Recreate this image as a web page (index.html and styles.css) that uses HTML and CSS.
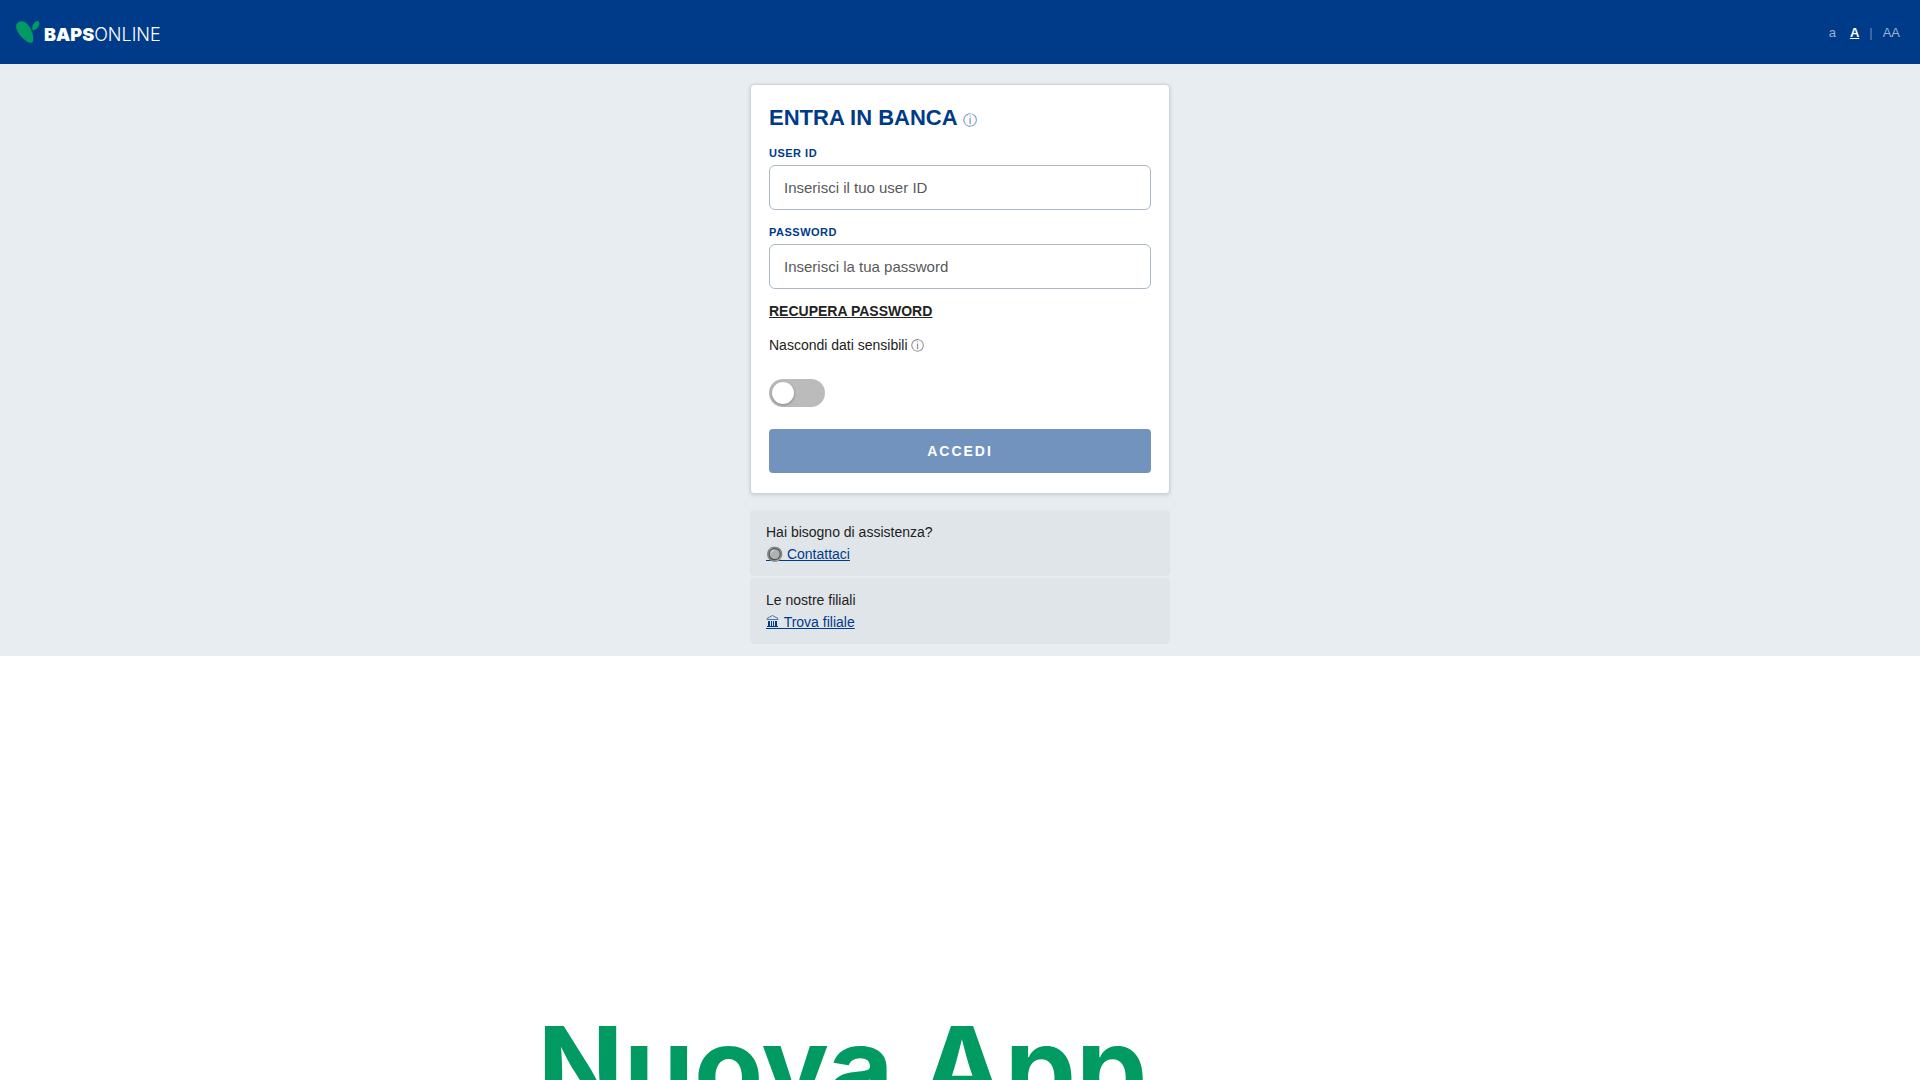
FILE: index.html
```html
<!DOCTYPE html>
<html lang="it">
<head>
<meta charset="utf-8">
<title>BAPSONLINE</title>
<link rel="stylesheet" href="styles.css">
</head>
<body>
<header class="topbar">
  <a class="logo" href="#">
    <svg class="logo-mark" viewBox="0 0 24 24" width="24" height="24" aria-hidden="true">
      <path d="M2 2.500C5 0 10 1.500 13 6C16 10.500 17.800 16 17 21C16.500 23.500 14 23.300 11 21.500C6 18.500 2 13 0.500 9C-0.300 6 0.200 4 2 2.500Z"/>
      <path d="M16.500 10C15.500 6 17.500 2.500 20.500 1.200C23.300 0.300 23.900 3 23 5.500C21.800 8.300 19 10.800 16.500 10Z"/>
    </svg>
    <span class="logo-text"><strong>BAPS</strong>ONLINE</span>
  </a>
  <nav class="text-size" aria-label="Dimensione testo">
    <a class="size small" href="#">a</a>
    <a class="size active" href="#">A</a>
    <span class="divider">|</span>
    <a class="size" href="#">AA</a>
  </nav>
</header>
<main>
  <section class="access">
    <form class="card">
      <h1 class="title">ENTRA IN BANCA <span class="info">ⓘ</span></h1>
      <label class="label" for="user">USER ID</label>
      <input class="field" id="user" type="text" placeholder="Inserisci il tuo user ID">
      <label class="label" for="pass">PASSWORD</label>
      <input class="field" id="pass" type="password" placeholder="Inserisci la tua password">
      <a class="recover" href="#">RECUPERA PASSWORD</a>
      <label class="hide-label" for="hide">Nascondi dati sensibili <span class="hint">ⓘ</span></label>
      <input class="switch" id="hide" type="checkbox">
      <button class="submit" type="button">ACCEDI</button>
    </form>
    <div class="help">
      <p class="help-text">Hai bisogno di assistenza?</p>
      <a class="help-link" href="#">🔘 Contattaci</a>
    </div>
    <div class="help">
      <p class="help-text">Le nostre filiali</p>
      <a class="help-link" href="#"><svg class="branch" viewBox="0 0 14 16" width="14" height="16" aria-hidden="true"><path class="line" d="M1 5.500V4.500L6.500 1.500L12 4.500V5.500Z"/><path d="M2 7h2v5H2zM5 7h1v5H5zM7 7h1v5H7zM9 7h2v5H9zM1 12h11v1H1z"/><path d="M0 14h14v1H0z"/></svg> Trova filiale</a>
    </div>
  </section>
  <section class="promo">
    <h2 class="promo-title">Nuova App</h2>
  </section>
</main>
</body>
</html>
```
FILE: styles.css
```css
* { box-sizing: border-box; }
body {
  margin: 0;
  background: #fff;
  color: #222;
  font: 14px/22px "Liberation Sans", Arial, sans-serif;
}
.topbar {
  display: flex;
  align-items: center;
  justify-content: space-between;
  height: 64px;
  padding: 0 20px 0 16px;
  background: #003b8a;
}
.logo {
  display: flex;
  align-items: center;
  gap: 4px;
  color: #fff;
  text-decoration: none;
}
.logo-mark { fill: #009a62; }
.logo-text { padding-top: 6px; font: 300 18px/20px Inter, sans-serif; }
.logo-text strong { font-weight: 900; }
.text-size { display: flex; gap: 10px; padding-top: 2px; font-size: 13px; }
.size { color: #99b1d0; text-decoration: none; }
.small { margin-right: 4px; }
.active { color: #fff; font-weight: bold; text-decoration: underline; }
.divider { color: #6689b9; }
.access {
  padding: 20px 16px 10px;
  background: #e8edf1;
}
.card, .help { max-width: 420px; margin: 0 auto; }
.card {
  display: flex;
  flex-direction: column;
  align-items: flex-start;
  margin-bottom: 16px;
  padding: 18px 18px 20px;
  border: 1px solid #ccd5de;
  border-radius: 4px;
  background: #fff;
  box-shadow: 0 1px 4px rgba(0, 0, 0, .15);
}
.title { margin: 0 0 7px; color: #003b8a; font-size: 22px; line-height: 30px; }
.info { color: #003b8a; font-size: 14px; font-weight: normal; opacity: .7; }
.label {
  margin-top: 5px;
  color: #003b8a;
  font-size: 11px;
  font-weight: bold;
  letter-spacing: .5px;
  line-height: 12px;
}
.field {
  width: 100%;
  height: 45px;
  margin: 6px 0 11px;
  padding: 0 14px;
  border: 1px solid #adb6c4;
  border-radius: 6px;
  background: #fff;
  font: 15px "Liberation Sans", Arial, sans-serif;
}
.field::placeholder { color: #595959; }
.recover { color: #222; font-weight: bold; }
.hide-label { margin: 12px 0 22px; }
.hint { font-size: 13px; opacity: .7; }
.switch {
  appearance: none;
  width: 56px;
  height: 28px;
  margin: 0 0 22px;
  padding: 3px;
  border-radius: 14px;
  background: #bbb;
}
.switch::before {
  content: "";
  display: block;
  width: 22px;
  height: 22px;
  border-radius: 50%;
  background: #fff;
  box-shadow: 0 1px 3px rgba(0, 0, 0, .3);
}
.switch:checked::before { margin-left: auto; }
.submit {
  width: 100%;
  height: 44px;
  border: 0;
  border-radius: 4px;
  background: #7393bf;
  color: #fff;
  font: bold 14px "Liberation Sans", Arial, sans-serif;
  letter-spacing: 2px;
}
.help { margin-bottom: 2px; padding: 11px 16px; border-radius: 4px; background: #e0e5e9; }
.help-text { margin: 0; }
.help-link { color: #003b8a; }
.branch { fill: #003b8a; vertical-align: -3px; }
.branch .line { fill: none; stroke: #4b75ad; }
.promo { padding: 343px 16px 40px 28%; }
.promo-title {
  margin: 0;
  color: #009a62;
  font: 700 113px/136px Inter, sans-serif;
  white-space: nowrap;
}
```
